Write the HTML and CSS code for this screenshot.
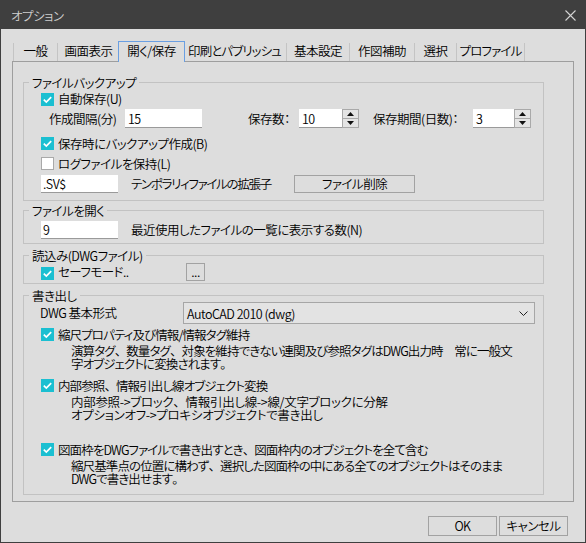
FILE: index.html
```html
<!DOCTYPE html>
<html lang="ja">
<head>
<meta charset="utf-8">
<title>オプション</title>
<link rel="stylesheet" href="styles.css">
</head>
<body>
<div class="window">
  <div class="titlebar">
    <span class="title">オプション</span>
    <svg class="close" width="11" height="11" viewBox="0 0 11 11"><path d="M0.5 0.5L10.5 10.5M10.5 0.5L0.5 10.5" stroke="#d4d4d4" stroke-width="1.1" fill="none"/></svg>
  </div>
  <div class="content">
    <div class="tabs">
      <div class="tab t-general">一般</div>
      <div class="tab t-display">画面表示</div>
      <div class="tab active">開く/保存</div>
      <div class="tab t-print">印刷とパブリッシュ</div>
      <div class="tab t-basic">基本設定</div>
      <div class="tab t-draft">作図補助</div>
      <div class="tab t-select">選択</div>
      <div class="tab t-profile">プロファイル</div>
    </div>
    <div class="panel">
      <fieldset class="group g-backup">
        <legend>ファイルバックアップ</legend>
        <div class="row row-cb r-autosave">
          <span class="cb on"><svg viewBox="0 0 13 13"><path d="M2.8 6.6L5.3 9.1L10.2 4.1" fill="none" stroke="#fff" stroke-width="1.7"/></svg></span>
          <span class="lbl">自動保存(U)</span>
        </div>
        <div class="row r-interval">
          <span class="lbl w-interval">作成間隔(分)</span>
          <span class="edit w-15">15</span>
          <span class="lbl w-count">保存数：</span>
          <span class="edit w-10">10</span>
          <span class="spin"><span class="spin-btn"><svg width="7" height="4" viewBox="0 0 7 4"><path d="M3.5 0L7 4H0Z" fill="#111"/></svg></span><span class="spin-btn"><svg width="7" height="4" viewBox="0 0 7 4"><path d="M0 0H7L3.5 4Z" fill="#111"/></svg></span></span>
          <span class="lbl w-period">保存期間(日数)：</span>
          <span class="edit w-3">3</span>
          <span class="spin"><span class="spin-btn"><svg width="7" height="4" viewBox="0 0 7 4"><path d="M3.5 0L7 4H0Z" fill="#111"/></svg></span><span class="spin-btn"><svg width="7" height="4" viewBox="0 0 7 4"><path d="M0 0H7L3.5 4Z" fill="#111"/></svg></span></span>
        </div>
        <div class="row row-cb r-backup">
          <span class="cb on"><svg viewBox="0 0 13 13"><path d="M2.8 6.6L5.3 9.1L10.2 4.1" fill="none" stroke="#fff" stroke-width="1.7"/></svg></span>
          <span class="lbl">保存時にバックアップ作成(B)</span>
        </div>
        <div class="row row-cb r-log">
          <span class="cb off"></span>
          <span class="lbl">ログファイルを保持(L)</span>
        </div>
        <div class="row r-ext">
          <span class="edit w-ext">.SV$</span>
          <span class="lbl w-extlbl">テンポラリィファイルの拡張子</span>
          <button class="btn btn-del">ファイル削除</button>
        </div>
      </fieldset>

      <fieldset class="group g-open">
        <legend>ファイルを開く</legend>
        <div class="row r-recent">
          <span class="edit w-ext">9</span>
          <span class="lbl ml-13">最近使用したファイルの一覧に表示する数(N)</span>
        </div>
      </fieldset>

      <fieldset class="group g-read">
        <legend>読込み(DWGファイル)</legend>
        <div class="row row-cb r-safe">
          <span class="cb on"><svg viewBox="0 0 13 13"><path d="M2.8 6.6L5.3 9.1L10.2 4.1" fill="none" stroke="#fff" stroke-width="1.7"/></svg></span>
          <span class="lbl w-safe">セーフモード..</span>
          <button class="btn btn-dots">...</button>
        </div>
      </fieldset>

      <fieldset class="group g-write">
        <legend>書き出し</legend>
        <div class="row r-format">
          <span class="lbl w-fmt">DWG 基本形式</span>
          <div class="select">
            <span>AutoCAD 2010 (dwg)</span>
            <svg width="9" height="5" viewBox="0 0 9 5"><path d="M0.5 0.5L4.5 4.5L8.5 0.5" fill="none" stroke="#222" stroke-width="1"/></svg>
          </div>
        </div>
        <div class="row row-cb r-opt1">
          <span class="cb on"><svg viewBox="0 0 13 13"><path d="M2.8 6.6L5.3 9.1L10.2 4.1" fill="none" stroke="#fff" stroke-width="1.7"/></svg></span>
          <span class="lbl opt-lbl">縮尺プロパティ及び情報/情報タグ維持</span>
        </div>
        <div class="desc">演算タグ<span class="fw">、</span>数量タグ<span class="fw">、</span>対象を維持できない連関及び参照タグはDWG出力時　常に一般文<br>字オブジェクトに変換されます<span class="fw">。</span></div>
        <div class="row row-cb r-opt2">
          <span class="cb on"><svg viewBox="0 0 13 13"><path d="M2.8 6.6L5.3 9.1L10.2 4.1" fill="none" stroke="#fff" stroke-width="1.7"/></svg></span>
          <span class="lbl opt-lbl">内部参照<span class="fw">、</span>情報引出し線オブジェクト変換</span>
        </div>
        <div class="desc desc-arrows">内部参照-&gt;ブロック<span class="fw">、</span>情報引出し線-&gt;線/文字ブロックに分解<br>オプションオフ-&gt;プロキシオブジェクトで書き出し</div>
        <div class="row row-cb r-opt3">
          <span class="cb on"><svg viewBox="0 0 13 13"><path d="M2.8 6.6L5.3 9.1L10.2 4.1" fill="none" stroke="#fff" stroke-width="1.7"/></svg></span>
          <span class="lbl opt-lbl">図面枠をDWGファイルで書き出すとき<span class="fw">、</span>図面枠内のオブジェクトを全て含む</span>
        </div>
        <div class="desc">縮尺基準点の位置に構わず<span class="fw">、</span>選択した図面枠の中にある全てのオブジェクトはそのまま<br>DWGで書き出せます<span class="fw">。</span></div>
      </fieldset>
    </div>
    <div class="actions">
      <button class="btn btn-dlg">OK</button>
      <button class="btn btn-dlg">キャンセル</button>
    </div>
  </div>
</div>
</body>
</html>
```

FILE: styles.css
```css
html, body {
  margin: 0;
  padding: 0;
}

body {
  font-family: "Noto Sans CJK JP", "Noto Sans", sans-serif;
  font-size: 12.5px;
  font-weight: 350;
  letter-spacing: -0.5px;
  font-feature-settings: "palt" 1;
  color: #000;
  background: #dddddd;
}

.fw {
  font-feature-settings: "palt" 0;
}

.window {
  width: 586px;
  height: 543px;
  box-sizing: border-box;
  border: 1px solid #3f3f3f;
  border-top: 0;
  background: #dddddd;
  overflow: hidden;
}

.titlebar {
  height: 29px;
  background: #3f3f3f;
  display: flex;
  align-items: center;
  justify-content: space-between;
  padding: 0 9px 0 10px;
}

.title {
  color: #cfcfcf;
  line-height: 16px;
  margin-top: 2px;
}

.close {
  margin-top: 2px;
}

.content {
  padding: 0 11px;
}

/* tabs */
.tabs {
  display: flex;
  align-items: flex-end;
  height: 20px;
  margin-top: 12px;
  padding-left: 1px;
}

.tab {
  height: 18px;
  box-sizing: border-box;
  line-height: 16px;
  padding: 0;
  text-align: center;
  border-right: 1px solid #c4c4c4;
  white-space: nowrap;
  flex: none;
}

.t-general { width: 45px; border-left: 1px solid #c4c4c4; }
.t-display { width: 62px; }
.t-print { width: 104px; letter-spacing: -0.9px; }
.t-basic { width: 63px; }
.t-draft { width: 65px; }
.t-select { width: 42px; }
.t-profile { width: 68px; letter-spacing: -0.8px; }

.tab.active {
  position: relative;
  z-index: 1;
  width: 67px;
  height: 21px;
  margin: 0 -2px -1px;
  padding-top: 1px;
  border: 1px solid #6a9fe2;
  border-bottom: 0;
  background: #dddddd;
}

/* panel */
.panel {
  height: 441px;
  box-sizing: border-box;
  border: 1px solid #9e9e9e;
  padding-top: 12px;
}

.group {
  width: 521px;
  box-sizing: border-box;
  margin: 0 0 0 10px;
  padding: 0;
  border: 1px solid #c2c2c2;
  min-width: 0;
}

.group legend {
  margin-left: 5px;
  padding: 0 3px;
  line-height: 17px;
}

.g-backup { padding-bottom: 7px; }
.g-open { margin-top: 1px; padding-bottom: 4px; }
.g-read { margin-top: 3px; padding-bottom: 2px; }
.g-write { margin-top: 3px; padding-bottom: 9px; }

.row {
  display: flex;
  align-items: center;
  white-space: nowrap;
}

.row-cb {
  padding-left: 17px;
}

.lbl {
  line-height: 16px;
  flex: none;
}

.cb {
  width: 13px;
  height: 13px;
  box-sizing: border-box;
  margin-right: 4px;
  flex: none;
  display: flex;
}

.cb svg {
  width: 13px;
  height: 13px;
}

.cb.on {
  background: #1bbfd1;
}

.cb.off {
  background: #ffffff;
  border: 1px solid #a9a9a9;
}

.edit {
  display: flex;
  align-items: center;
  box-sizing: border-box;
  height: 18px;
  padding-left: 3px;
  background: #ffffff;
  border-bottom: 1px solid #9a9a9a;
  flex: none;
}

.spin {
  display: flex;
  flex-direction: column;
  width: 17px;
  height: 19px;
  box-sizing: border-box;
  border: 1px solid #a9a9a9;
  background: #e4e4e4;
  flex: none;
}

.spin-btn {
  flex: 1;
  display: flex;
  align-items: center;
  justify-content: center;
}

.spin-btn + .spin-btn {
  border-top: 1px solid #a9a9a9;
}

.btn {
  font: inherit;
  font-feature-settings: inherit;
  letter-spacing: inherit;
  color: #000;
  background: #dddddd;
  border: 1px solid #a2a2a2;
  border-radius: 0;
  padding: 0;
  margin: 0;
  box-sizing: border-box;
  line-height: 16px;
  flex: none;
}

/* backup rows */
.r-autosave { height: 16px; }
.r-interval { height: 19px; margin-top: 2px; padding-left: 25px; }
.r-interval .edit { height: 19px; }
.w-interval { width: 76px; }
.w-15 { width: 77px; }
.w-count { width: 51px; margin-left: 46px; }
.w-10 { width: 43px; }
.w-period { width: 100px; margin-left: 14px; }
.w-3 { width: 41px; }
.r-backup { height: 17px; margin-top: 7px; }
.r-log { height: 17px; margin-top: 3px; }
.r-ext { height: 18px; margin-top: 3px; padding-left: 17px; }
.w-ext { width: 77px; padding-left: 2px; }
.w-extlbl { width: 163px; margin-left: 13px; letter-spacing: -1.3px; }
.btn-del { width: 121px; height: 18px; }

/* open */
.r-recent { height: 18px; margin-top: 2px; padding-left: 17px; }
.ml-13 { margin-left: 13px; }

/* read */
.r-safe { height: 18px; margin-top: -1px; }
.r-safe .cb { margin-top: 2px; }
.w-safe { width: 128px; }
.btn-dots { width: 19px; height: 18px; line-height: 12px; }

/* write */
.r-format { height: 22px; margin-top: -2px; padding-left: 16px; }
.w-fmt { width: 143px; }
.select {
  width: 352px;
  height: 22px;
  box-sizing: border-box;
  border: 1px solid #a6a6a6;
  background: #e3e3e3;
  display: flex;
  align-items: center;
  justify-content: space-between;
  padding: 0 6px 0 3px;
}

.r-opt1 { height: 17px; margin-top: 2px; }
.r-opt2 { height: 17px; margin-top: 7px; }
.r-opt3 { height: 17px; margin-top: 20px; }

.opt-lbl {
  letter-spacing: -0.9px;
}

.desc {
  margin: 1px 0 0 47px;
  line-height: 13px;
  white-space: nowrap;
  letter-spacing: -0.9px;
}

.desc-arrows {
  letter-spacing: -0.3px;
}

/* dialog buttons */
.actions {
  display: flex;
  justify-content: flex-end;
  gap: 2px;
  margin-top: 14px;
  padding-right: 6px;
}

.btn-dlg {
  width: 69px;
  height: 20px;
}
```
